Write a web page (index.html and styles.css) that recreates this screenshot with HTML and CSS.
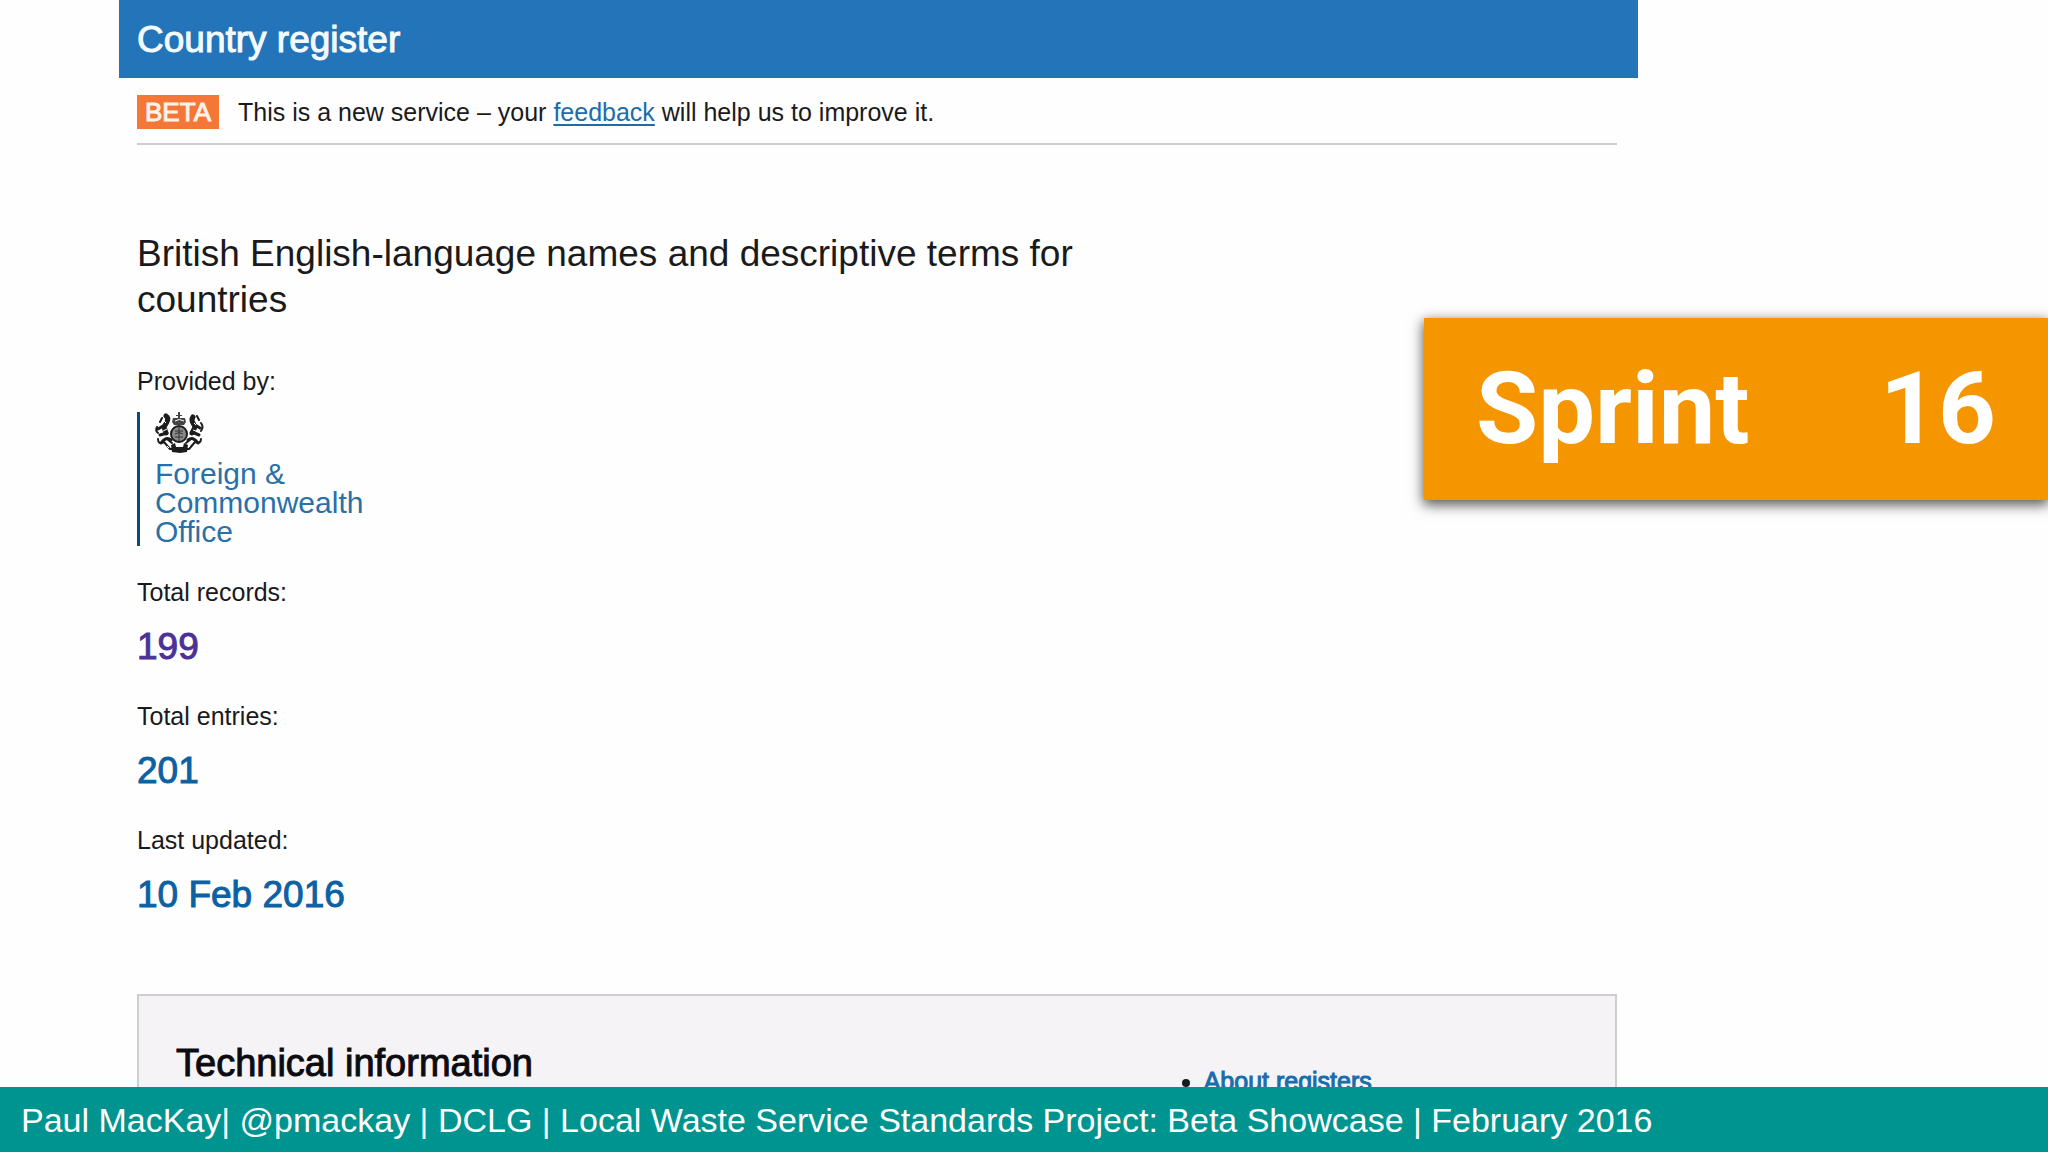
FILE: index.html
```html
<!DOCTYPE html>
<html lang="en">
<head>
<meta charset="utf-8">
<title>Country register</title>
<link rel="stylesheet" href="styles.css">
</head>
<body>
<main class="slide">
  <article class="register">
    <header class="register-header"><h1 class="title emphasis">Country register</h1></header>
    <div class="register-body">
      <p class="phase">
        <strong class="phase-tag">BETA</strong>
        <span>This is a new service – your <a class="link" href="#feedback">feedback</a> will help us to improve it.</span>
      </p>
      <h2 class="lead">British English-language names and descriptive terms for countries</h2>
      <dl class="facts">
        <div class="fact">
          <dt>Provided by:</dt>
          <dd>
            <a class="organisation" href="#fco">
              <svg class="crest" viewBox="0 0 49 41" aria-hidden="true">
                <g fill="none" stroke="#1c1c1c" stroke-linecap="round" stroke-linejoin="round">
                  <path stroke-width="5" d="M11 4q3 2 1 6l-3 5 2 6M38 5q-2 3 0 6l2 4-3 6"/>
                  <path stroke-width="3" d="M8 14l-5 3M12 21l-7 2M40 13l5 3M37 20l7 3M6 31q5-7 10-3M43 31q-5-7-10-3"/>
                  <path stroke-width="2" d="M2 15q-2 4 1 6M46 11q3 4 0 8M3 27q0 6 6 3l6 7h19l6-7q6 2 6-3M12 27l5 4M36 27l-5 4M7 6l-2 4M42 4l2 4"/>
                </g>
                <circle cx="24" cy="22" r="8" fill="#8a8a8a" stroke="#1c1c1c" stroke-width="2"/>
                <path fill="none" stroke="#333" stroke-width="1" d="M20 19h8M20 25h8M24 15v14M20 22q4-3 8 0"/>
                <path fill="#444" d="M23 0h2v3h2v1h-2v2h5l1 4-2 3H19l-2-3 1-4h5V4h-2V3h2z"/>
                <path fill="#1c1c1c" d="M16 33l4-2 1 4h7l1-4 4 2-1 7-7 1-8-1z"/>
                <path fill="none" stroke="#fff" stroke-width="1" d="M20 9q4-3 9 0M9 9l2 2M39 11l2 2M22 33h5M12 34l2 2M35 34l-2 2M8 19l4-2M38 18l3 1"/>
              </svg>
              <span>Foreign &amp;<br>Commonwealth<br>Office</span>
            </a>
          </dd>
        </div>
        <div class="fact">
          <dt>Total records:</dt>
          <dd><a class="figure emphasis visited" href="#records">199</a></dd>
        </div>
        <div class="fact">
          <dt>Total entries:</dt>
          <dd><a class="figure emphasis" href="#entries">201</a></dd>
        </div>
        <div class="fact">
          <dt>Last updated:</dt>
          <dd><a class="figure emphasis" href="#updated">10 Feb 2016</a></dd>
        </div>
      </dl>
      <section class="technical">
        <h2 class="technical-title emphasis">Technical information</h2>
        <ul class="technical-links">
          <li><a class="link emphasis" href="#about">About registers</a></li>
        </ul>
      </section>
    </div>
  </article>
  <aside class="banner"><span>Sprint</span><span>16</span></aside>
</main>
<footer class="credits">Paul MacKay| @pmackay | DCLG | Local Waste Service Standards Project: Beta Showcase | February 2016</footer>
</body>
</html>
```
FILE: styles.css
```css
* { box-sizing: border-box; }

body {
  display: flex;
  flex-direction: column;
  height: 100vh;
  margin: 0;
  background: #fefefe;
  color: #1a1a1c;
  font-family: "Liberation Sans", Arial, sans-serif;
  font-size: 25px;
  line-height: 34px;
}

h1, h2, p, dl, dd, ul { margin: 0; padding: 0; }

h1, h2 { font-weight: 400; }

.emphasis { -webkit-text-stroke: 1px currentColor; }

.slide {
  position: relative;
  flex: 1;
  min-height: 0;
  overflow: hidden;
}

.register { margin: 0 20% 0 119px; }

.register-header {
  padding: 18px 18px 16px;
  background: #2374b8;
  color: #f4fbff;
}

.title { font-size: 37px; line-height: 44px; }

.register-body { padding: 0 21px 0 18px; }

.phase {
  display: flex;
  align-items: center;
  gap: 19px;
  padding: 17px 0 14px;
  border-bottom: 2px solid #cccccf;
}

.phase-tag {
  padding: 0 8px;
  background: #f47738;
  color: #fff3e8;
  font-size: 26px;
  font-weight: 400;
  -webkit-text-stroke: 1px currentColor;
}

.link { color: #1a6cab; text-underline-offset: 3px; }

.lead {
  max-width: 980px;
  margin-top: 86px;
  font-size: 37px;
  line-height: 46px;
}

.facts {
  display: flex;
  flex-direction: column;
  gap: 29px;
  margin-top: 41px;
}

.organisation {
  display: block;
  width: 260px;
  margin-top: 14px;
  padding-left: 15px;
  border-left: 3px solid #0f4a7c;
  color: #2a70a8;
  font-size: 30px;
  line-height: 29px;
  text-decoration: none;
}

.crest { display: block; width: 49px; height: 41px; margin-bottom: 6px; }

.figure {
  display: block;
  margin-top: 15px;
  color: #0b61a4;
  font-size: 37px;
  line-height: 46px;
  text-decoration: none;
}

.visited { color: #4c3196; }

.technical {
  display: grid;
  grid-template-columns: 69% 1fr;
  height: 300px;
  margin-top: 76px;
  padding: 44px 37px;
  border: 2px solid #cfcdd0;
  background: #f5f3f6;
}

.technical-title { color: #0c0c10; font-size: 38px; line-height: 46px; }

.technical-links { padding: 24px 0 0 60px; }

.banner {
  position: absolute;
  top: 318px;
  right: 0;
  display: flex;
  align-items: center;
  justify-content: space-between;
  width: 624px;
  padding: 30px 52px;
  background: #f59500;
  box-shadow: 0 4px 12px 1px rgba(0, 0, 0, 0.65);
  color: #fff;
  font-family: Roboto, sans-serif;
  font-size: 101px;
  font-weight: 700;
  line-height: 122px;
}

.credits {
  padding: 13px 21px 12px;
  background: #009490;
  color: #fff;
  font-size: 34px;
  line-height: 40px;
}
```
